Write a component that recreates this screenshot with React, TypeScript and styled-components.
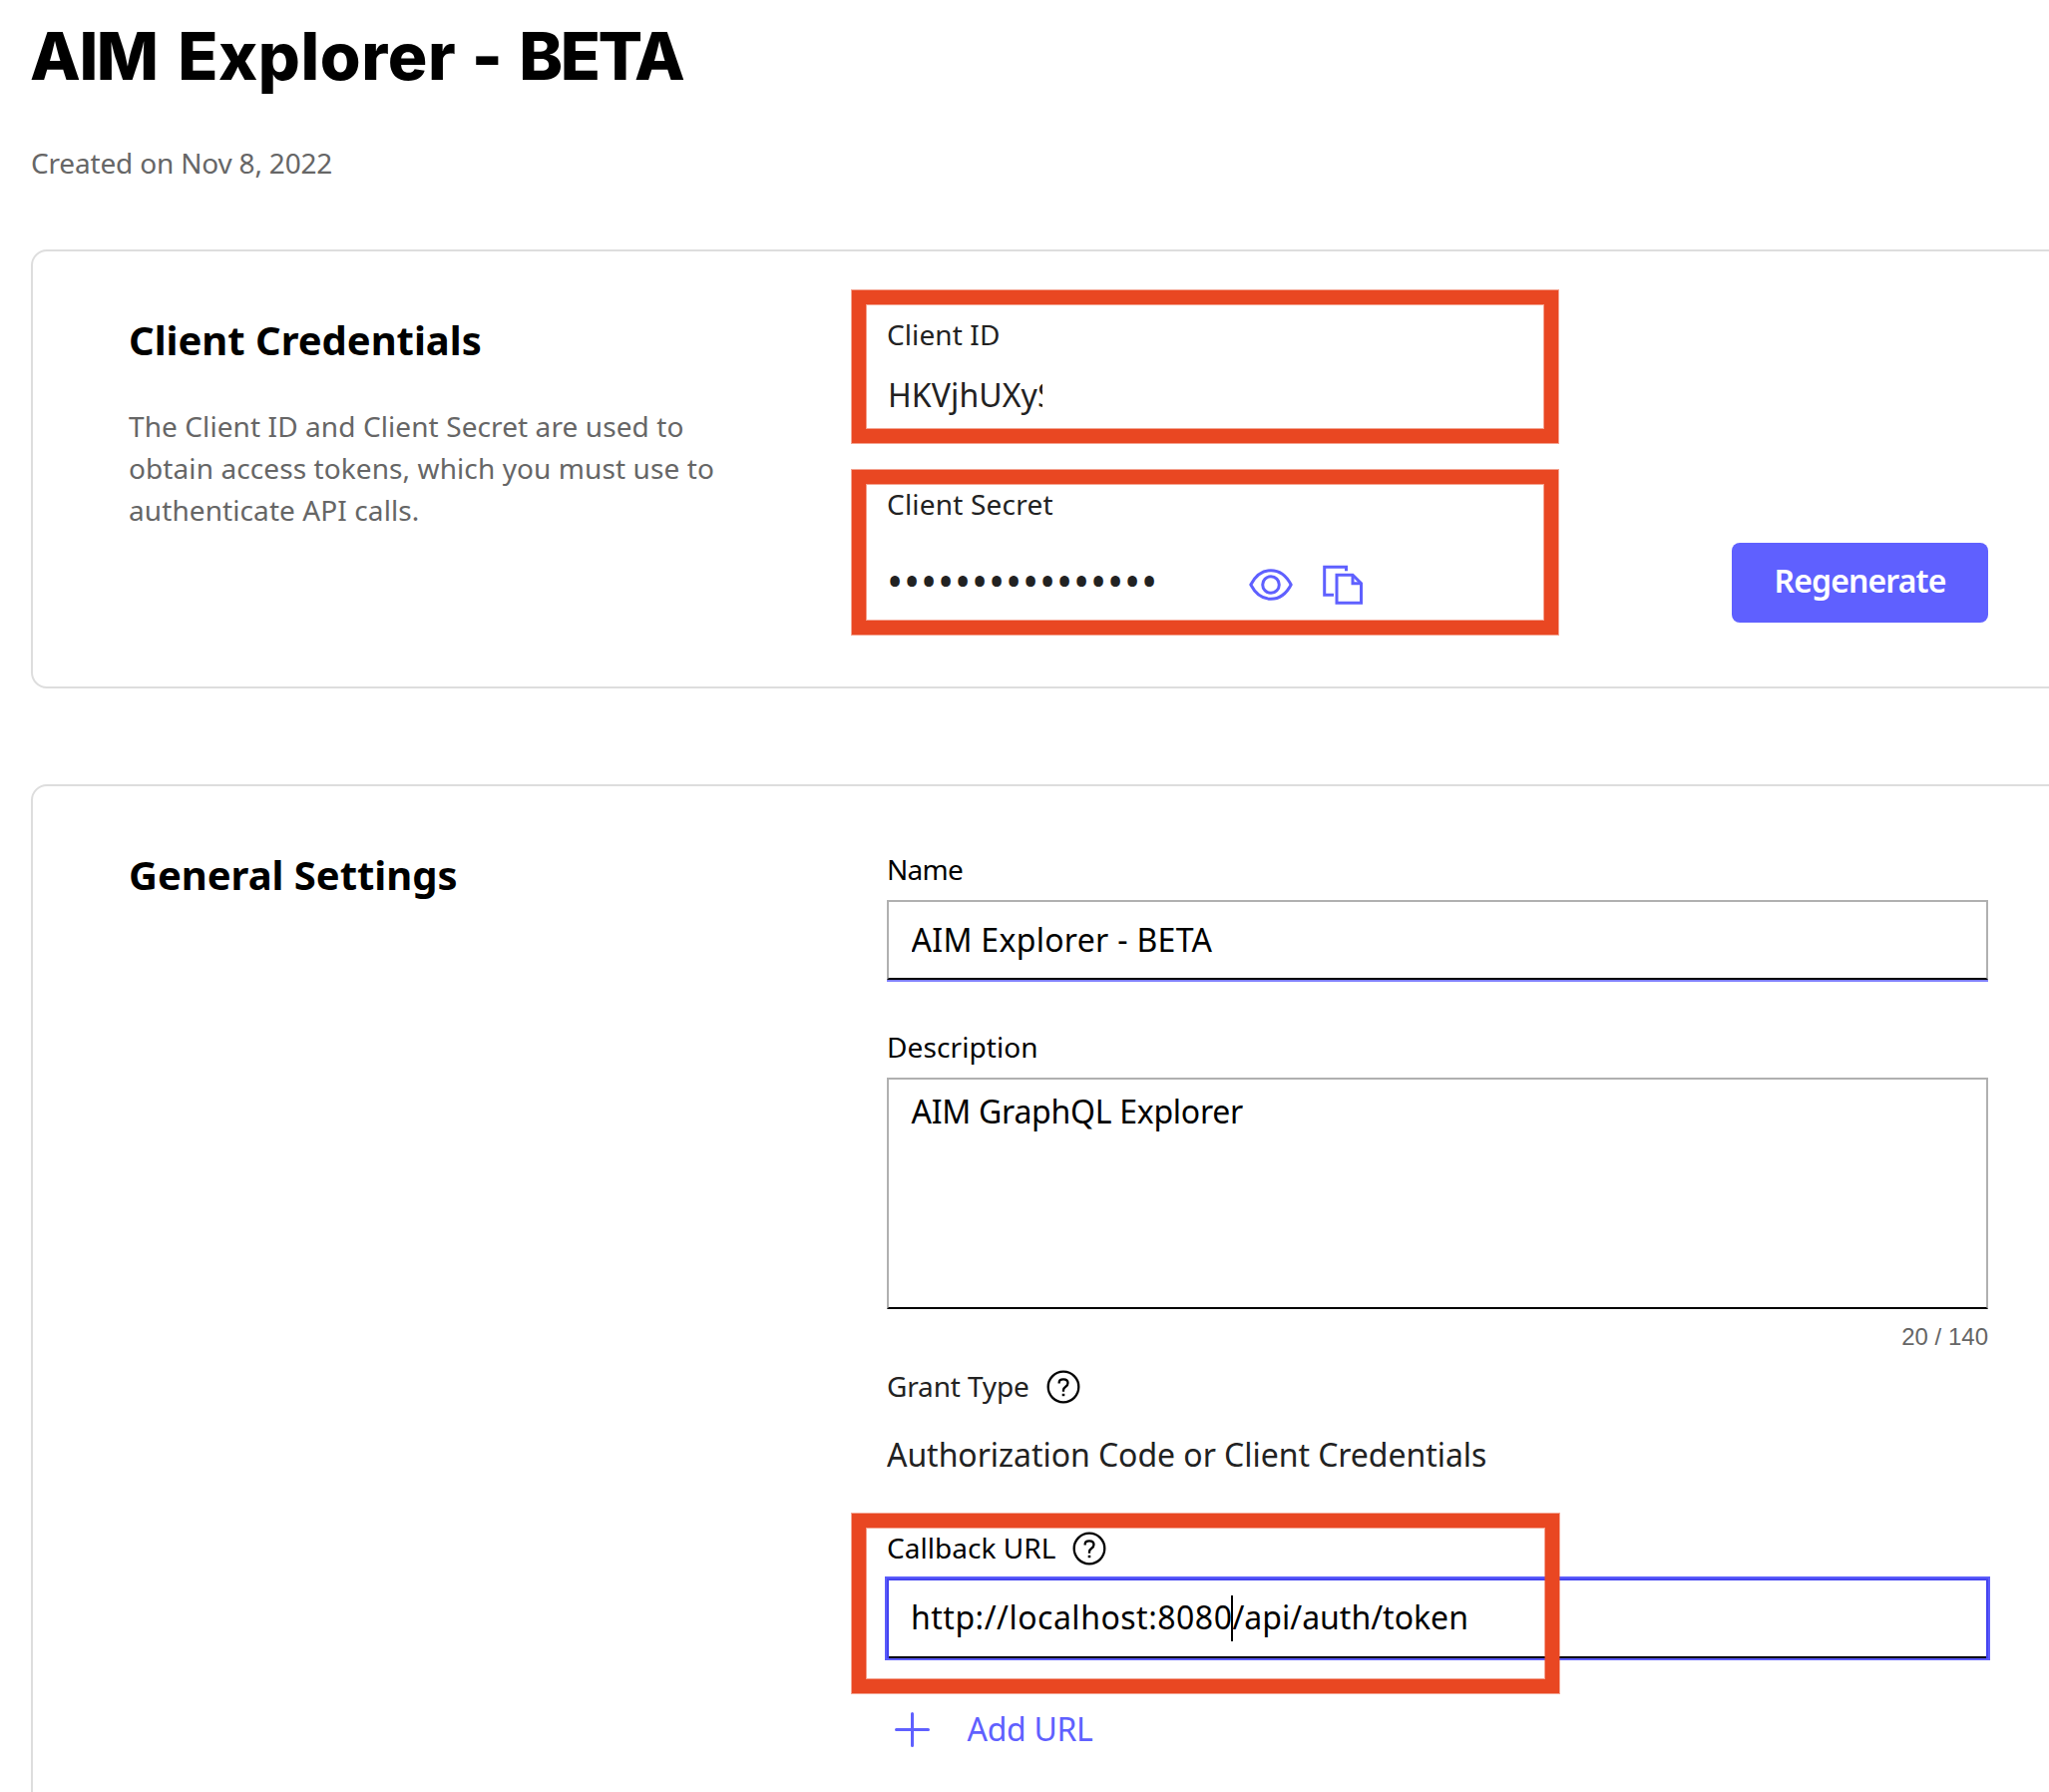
import React from "react";
import styled, { createGlobalStyle } from "styled-components";

const ACCENT = "#5f60ff";
const INK = "#222222";
const MUTED = "#666666";
const SANS = '"Noto Sans", "Open Sans", sans-serif';

const GlobalStyle = createGlobalStyle`
  *, *::before, *::after { box-sizing: border-box; }
  html, body { margin: 0; padding: 0; background: #ffffff; }
  body { overflow: hidden; }
`;

const Page = styled.main`
  display: flex;
  flex-direction: column;
  width: 2054px;
  height: 1796px;
  padding: 16px 0 0 31px;
  overflow: hidden;
  background: #ffffff;
  color: #000000;
  font-family: ${SANS};
`;

const Title = styled.h1`
  margin: 0 0 0 -1px;
  font-family: Inter, sans-serif;
  font-size: 66px;
  font-weight: 800;
  line-height: 80px;
  white-space: nowrap;
`;

const Word = styled.span<{ $track: number; $after?: number }>`
  margin-right: ${(p) => p.$after ?? 0}px;
  letter-spacing: ${(p) => p.$track}px;
`;

const Created = styled.p`
  margin: 46px 0 66px;
  color: ${MUTED};
  font-size: 28px;
  line-height: 42px;
  letter-spacing: -0.18px;
`;

const Card = styled.section<{ $height: number }>`
  display: grid;
  grid-template-columns: 760px 1104px;
  flex: none;
  width: 2100px;
  height: ${(p) => p.$height}px;
  margin-bottom: 96px;
  padding: 62px 0 0 96px;
  border: 2px solid #dddddd;
  border-radius: 16px;
`;

const Intro = styled.div`
  padding-top: 2px;
`;

const CardTitle = styled.h2`
  margin: 0 0 40px;
  font-size: 40px;
  font-weight: 700;
  line-height: 50px;
  letter-spacing: -0.03px;
`;

const Blurb = styled.p`
  width: 600px;
  margin: 0;
  color: ${MUTED};
  font-size: 28px;
  line-height: 42px;
  letter-spacing: 0.09px;
`;

const Fields = styled.div`
  display: flex;
  flex-direction: column;
`;

const Group = styled.div<{ $gap: number; $after?: number }>`
  position: relative;
  display: flex;
  flex-direction: column;
  gap: ${(p) => p.$gap}px;
  margin-bottom: ${(p) => p.$after ?? 0}px;
`;

const Label = styled.label<{ $dim?: boolean; $track?: number }>`
  display: flex;
  align-items: center;
  gap: 17px;
  height: 42px;
  color: ${(p) => (p.$dim ? INK : "#000000")};
  font-size: 28px;
  line-height: 42px;
  letter-spacing: ${(p) => p.$track ?? 0}px;
`;

const Value = styled.div<{ $clip?: number; $track?: number }>`
  width: ${(p) => (p.$clip ? `${p.$clip}px` : "auto")};
  padding-left: ${(p) => (p.$clip ? 1 : 0)}px;
  overflow: hidden;
  color: ${INK};
  font-size: 32px;
  line-height: 42px;
  letter-spacing: ${(p) => p.$track ?? 0}px;
  white-space: nowrap;
`;

const SecretRow = styled.div`
  display: flex;
  align-items: center;
  height: 80px;
`;

const Mask = styled.span`
  width: 362px;
  margin-bottom: 2px;
  color: ${INK};
  font-size: 43px;
  line-height: 42px;
  letter-spacing: 0.84px;
  white-space: nowrap;
`;

const IconButton = styled.button`
  display: flex;
  margin: 4px 28px 0 0;
  padding: 0;
  border: 0;
  background: none;
  color: ${ACCENT};
`;

const PrimaryButton = styled.button`
  width: 257px;
  height: 80px;
  margin-left: auto;
  padding: 0 0 5px;
  border: 0;
  border-radius: 8px;
  background: ${ACCENT};
  color: #ffffff;
  font-family: ${SANS};
  font-size: 32px;
  font-weight: 600;
  letter-spacing: -0.88px;
`;

const TextInput = styled.input`
  width: 100%;
  height: 80px;
  padding: 0 22.5px 2px;
  border: 2px solid #b0b0b0;
  border-bottom-color: #000000;
  border-radius: 0;
  outline: none;
  box-shadow: 0 2px 0 #7f80ff;
  background: #ffffff;
  color: #000000;
  font-family: ${SANS};
  font-size: 32px;
  letter-spacing: 0.3px;
`;

const TextArea = styled.textarea`
  display: block;
  width: 100%;
  height: 232px;
  padding: 11px 22.5px;
  border: 2px solid #b0b0b0;
  border-bottom-color: #000000;
  border-radius: 0;
  outline: none;
  resize: none;
  background: #ffffff;
  color: #000000;
  font-family: ${SANS};
  font-size: 32px;
  line-height: 42px;
  letter-spacing: -0.27px;
`;

const Counter = styled.div`
  margin: 14px 0;
  color: ${MUTED};
  font-family: "Liberation Sans", Arial, sans-serif;
  font-size: 24px;
  line-height: 28px;
  text-align: right;
`;

const ActiveField = styled.div`
  display: flex;
  align-items: center;
  height: 80px;
  padding: 0 22px 4px;
  border: solid #4444f0;
  border-width: 2px 2px 0;
  box-shadow: inset 0 -2px 0 #000000, 0 0 0 2px #5b5cfb;
  font-size: 32px;
  line-height: 46px;
  white-space: nowrap;
`;

const BeforeCaret = styled.span`
  letter-spacing: 0.5px;
`;

const Caret = styled.span`
  flex: none;
  width: 2px;
  height: 46px;
  margin: 2px -1px 0;
  background: #000000;
`;

const AddButton = styled.button`
  display: flex;
  align-items: center;
  gap: 38px;
  height: 42px;
  padding: 0 0 0 7.5px;
  border: 0;
  background: none;
  color: ${ACCENT};
  font-family: ${SANS};
  font-size: 32px;
  line-height: 42px;
  letter-spacing: -0.3px;
`;

const Highlight = styled.div<{ $top: number; $width: number; $height: number }>`
  position: absolute;
  top: ${(p) => p.$top}px;
  left: -35px;
  width: ${(p) => p.$width}px;
  height: ${(p) => p.$height}px;
  border: 14px solid #e94722;
  box-shadow: 0 0 0 1px rgba(233, 71, 34, 0.5), inset 0 0 0 1px rgba(233, 71, 34, 0.5);
  pointer-events: none;
`;

const HelpSvg = styled.svg`
  flex: none;
  margin-top: 2px;
`;

const HelpIcon = () => (
  <HelpSvg width="34" height="34" viewBox="0 0 34 34" fill="none" stroke="#000000" strokeWidth="2.3">
    <circle cx="17" cy="17" r="15.3" />
    <path d="M12.700 13.600V12.600C12.700 10.500 14.300 9.300 17 9.300C19.900 9.300 21.500 10.700 21.500 13C21.500 14.800 20.700 15.700 19.300 16.700C17.600 17.900 17 18.600 17 20.200V21.800" />
    <path d="M17 23.800V26.200" strokeWidth="2.600" />
  </HelpSvg>
);

const EyeIcon = () => (
  <svg width="46" height="42" viewBox="0 0 46 42" fill="none" stroke="currentColor" strokeWidth="3">
    <path d="M2.800 21C7.500 12 14.500 6.700 23 6.700C31.500 6.700 38.500 12 43.200 21C38.500 30 31.500 35.300 23 35.300C14.500 35.300 7.500 30 2.800 21Z" strokeLinejoin="round" />
    <circle cx="23" cy="21" r="8.300" />
  </svg>
);

const CopyIcon = () => (
  <svg width="42" height="42" viewBox="0 0 42 42" fill="none" stroke="currentColor" strokeWidth="3">
    <path d="M24.500 7.300V3.200H2.700V31.200H12" />
    <path d="M15 11.200H31L39.500 19.700V39.200H15Z" />
    <path d="M31 11.200V19.700H39.500" />
  </svg>
);

const PlusIcon = () => (
  <svg width="35" height="35" viewBox="0 0 35 35" fill="none" stroke="currentColor" strokeWidth="3" strokeLinecap="round">
    <path d="M17.500 1.500V33.500M1.500 17.500H33.500" />
  </svg>
);

export default function App() {
  return (
    <>
      <GlobalStyle />
      <Page>
        <Title>
          <Word $track={-1.4} $after={6}>AIM</Word> <Word $track={0.6} $after={1}>Explorer</Word>{" "}
          <Word $track={0} $after={2}>-</Word> <Word $track={-2.4}>BETA</Word>
        </Title>
        <Created>Created on Nov 8, 2022</Created>

        <Card $height={440}>
          <Intro>
            <CardTitle>Client Credentials</CardTitle>
            <Blurb>
              The Client ID and Client Secret are used to
              <br />
              obtain access tokens, which you must use to
              <br />
              authenticate API calls.
            </Blurb>
          </Intro>
          <Fields>
            <Group $gap={19} $after={67}>
              <Label $dim $track={0.1}>Client ID</Label>
              <Value $clip={156} $track={0.1}>HKVjhUXyS</Value>
              <Highlight $top={-23} $width={708} $height={153} />
            </Group>
            <Group $gap={18}>
              <Label $dim $track={0.2}>Client Secret</Label>
              <SecretRow>
                <Mask>{"•".repeat(16)}</Mask>
                <IconButton aria-label="Show secret"><EyeIcon /></IconButton>
                <IconButton aria-label="Copy secret"><CopyIcon /></IconButton>
                <PrimaryButton>Regenerate</PrimaryButton>
              </SecretRow>
              <Highlight $top={-13} $width={708} $height={165} />
            </Group>
          </Fields>
        </Card>

        <Card $height={1100}>
          <Intro>
            <CardTitle>General Settings</CardTitle>
          </Intro>
          <Fields>
            <Group $gap={10} $after={46}>
              <Label $track={-0.7}>Name</Label>
              <TextInput defaultValue="AIM Explorer - BETA" />
            </Group>
            <Group $gap={10}>
              <Label $track={0.1}>Description</Label>
              <TextArea defaultValue="AIM GraphQL Explorer" spellCheck={false} />
            </Group>
            <Counter>20 / 140</Counter>
            <Group $gap={27} $after={51}>
              <Label $dim $track={-0.15}>
                <span>Grant Type</span>
                <HelpIcon />
              </Label>
              <Value $track={-0.05}>Authorization Code or Client Credentials</Value>
            </Group>
            <Group $gap={10} $after={50}>
              <Label $track={0.03}>
                <span>Callback URL</span>
                <HelpIcon />
              </Label>
              <ActiveField>
                <BeforeCaret>http://localhost:8080</BeforeCaret>
                <Caret />
                <span>/api/auth/token</span>
              </ActiveField>
              <Highlight $top={-13} $width={709} $height={180} />
            </Group>
            <AddButton>
              <PlusIcon />
              <span>Add URL</span>
            </AddButton>
          </Fields>
        </Card>
      </Page>
    </>
  );
}
